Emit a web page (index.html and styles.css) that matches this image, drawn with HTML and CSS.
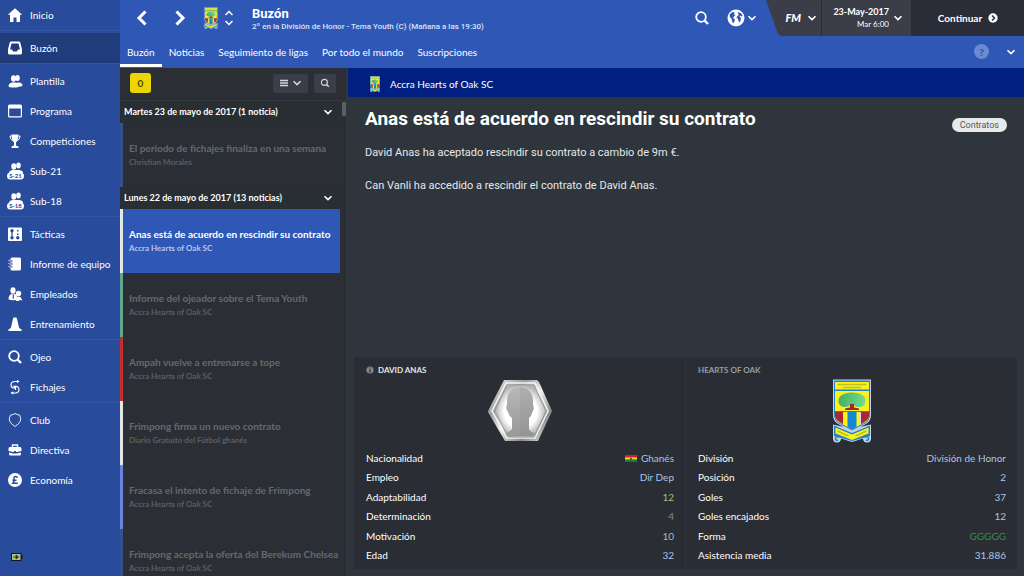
FILE: index.html
```html
<!DOCTYPE html>
<html lang="es">
<head>
    <meta charset="UTF-8">
    <meta name="viewport" content="width=device-width, initial-scale=1">
    <title>Buzón</title>
    <link rel="stylesheet" href="styles.css">
</head>
<body>
<svg class="sprite" aria-hidden="true">
    <defs>
        <linearGradient id="leaf" x1="0" y1="0" x2="1" y2="0">
            <stop offset="0" stop-color="#45b060"/>
            <stop offset="1" stop-color="#72dc94"/>
        </linearGradient>
        <linearGradient id="frame" x1="0" y1="0" x2="1" y2="1">
            <stop offset="0" stop-color="#f4f4f4"/>
            <stop offset=".3" stop-color="#9d9d9d"/>
            <stop offset=".5" stop-color="#f2f2f2"/>
            <stop offset=".75" stop-color="#8a8a8a"/>
            <stop offset="1" stop-color="#f0f0f0"/>
        </linearGradient>
        <radialGradient id="glow">
            <stop offset=".65" stop-color="#ffffff"/>
            <stop offset="1" stop-color="#b4b4b4"/>
        </radialGradient>
        <linearGradient id="head" x1="0" y1="0" x2="0" y2="1">
            <stop offset="0" stop-color="#b8b8b8"/>
            <stop offset="1" stop-color="#989898"/>
        </linearGradient>
    </defs>
    <symbol id="crest" viewBox="0 0 39 64">
        <path d="M.5.5h38v36q0 6-6 9l-5 2.500 11-2.500v14q0 4-4 4-4 0-4-4l-11 3.500-11-3.500q0 4-4 4-4 0-4-4v-14l11 2.500-5-2.500q-6-3-6-9z" fill="#c3d4ea"/>
        <path d="M1.500 1.500h36v34q0 6-5 9l-13 7-13-7q-5-3-5-9z" fill="#1c83c9"/>
        <path d="M2.500 3h34v7.500h-34zM2.500 12h34v20h-34z" fill="#fdf01c"/>
        <path d="M5 5.500h29M10 8.500h19" stroke="#b9c22a" stroke-width="1.500"/>
        <path d="M6 22q0-8 13.500-8.500Q33 14 33 22q0 6-7 6-4 0-5-3h-3q-1 3-5 3-7 0-7-6z" fill="url(#leaf)"/>
        <path d="M17.500 25h4v3.500l5 1v1.500h-14v-1.500l5-1z" fill="#a32531"/>
        <path d="M2.500 33h34v4q0 4-5 7l-12 6.500-12-6.500q-5-3-5-7z" fill="#fdf01c"/>
        <path d="M2.500 33h8.500v12.500l-4-2.500q-4.500-3-4.500-6zM36.500 33H28v12.500l4-2.500q4.500-3 4.500-6z" fill="#ab2733"/>
        <path d="M15 33h9v15l-4.500 2.500L15 48z" fill="#1488d4"/>
        <path d="M11 33v12.500M28 33v12.500" stroke="#cde0ec"/>
        <path d="M1.500 46.500l18 7.500 18-7.500v10.500l-18 5-18-5z" fill="#1c83c9"/>
        <path d="M3 48.500l16.500 7 16.500-7v6l-16.500 6.500-16.500-6.500z" fill="#fdf01c"/>
        <path d="M5 52l11 5M23 57l11-5" stroke="#b9c22a" stroke-width="1.800"/>
        <path d="M7 58q-4-1-4 1.500t2.500 1.500M32 58q4-1 4 1.500t-2.500 1.500" fill="none" stroke="#1c83c9" stroke-width="1.500"/>
    </symbol>
    <symbol id="people" viewBox="0 0 16 16">
        <ellipse cx="10.500" cy="5" rx="2.300" ry="3"/>
        <path d="M10 9.500h3q2.500 1 2.500 2.500t-3 1.500h-2z"/>
        <ellipse cx="6.500" cy="5.500" rx="2.500" ry="3.300"/>
        <path d="M1.500 13q0-2.500 3.500-3.500h3.500q3.500 1 3.500 3.500 0 1.500-5.200 1.500T1.500 13z"/>
    </symbol>
    <symbol id="squad" viewBox="0 0 18 18">
        <ellipse cx="11.500" cy="3.500" rx="2.300" ry="3"/>
        <ellipse cx="6.800" cy="4.500" rx="2.500" ry="3.300"/>
        <path d="M2 11q0-2.500 3.500-3h7q3.500.5 3.500 3z"/>
        <rect x="0" y="10.500" width="17" height="7" rx="3.500"/>
    </symbol>
    <symbol id="down" viewBox="0 0 10 10">
        <path d="M1.500 3.200 5 6.600l3.500-3.400" fill="none" stroke="currentColor" stroke-width="1.600"/>
    </symbol>
    <symbol id="search" viewBox="0 0 16 16">
        <circle cx="7" cy="7" r="4.800" fill="none" stroke="currentColor" stroke-width="1.800"/>
        <path d="M10.500 10.500l3.500 3.500" stroke="currentColor" stroke-width="2.400"/>
    </symbol>
</svg>

<div class="app">
    <nav class="sidebar">
        <ul>
            <li><a href="#"><svg viewBox="0 0 16 16"><path d="M8 1.200l7.200 6.600H13V15H9.500v-4.500h-3V15H3V7.800H.8z"/></svg>Inicio</a></li>
        </ul>
        <ul class="current">
            <li><a href="#"><svg viewBox="0 0 16 16"><path fill-rule="evenodd" d="M4 1.500h8q1 0 1.300 1L15 9.500V13q0 1.500-1.500 1.500h-11Q1 14.500 1 13V9.500l1.700-7q.3-1 1.300-1zM4.500 3.500 3 9.500h2l1 2h4l1-2h2l-1.500-6z"/></svg>Buzón</a></li>
        </ul>
        <ul>
            <li><a href="#"><svg><use href="#people"/></svg>Plantilla</a></li>
            <li><a href="#"><svg viewBox="0 0 16 16"><path fill-rule="evenodd" d="M2.500 1.500h11q1.500 0 1.500 1.500v10q0 1.500-1.500 1.500h-11Q1 14.500 1 13V3q0-1.500 1.500-1.500zM2.200 5.500v7.800h11.600V5.500z"/></svg>Programa</a></li>
            <li><a href="#"><svg viewBox="0 0 16 16"><path d="M4.500 1.500h7q0 6-2.500 8v3l2.500 1v1.500h-7v-1.500l2.500-1v-3q-2.500-2-2.500-8z"/><path d="M4.500 3H3q0 3.500 2.500 4.500M11.500 3H13q0 3.500-2.500 4.500" fill="none" stroke="currentColor"/></svg>Competiciones</a></li>
            <li><a href="#"><svg class="big" viewBox="0 0 18 18"><use href="#squad"/><text x="8.500" y="16">S-21</text></svg>Sub-21</a></li>
            <li><a href="#"><svg class="big" viewBox="0 0 18 18"><use href="#squad"/><text x="8.500" y="16">S-18</text></svg>Sub-18</a></li>
        </ul>
        <ul>
            <li><a href="#"><svg viewBox="0 0 16 16"><rect x="1" y="1.500" width="14" height="13.500" rx="1"/><g class="ink"><circle cx="5" cy="4.800" r="1.700"/><circle cx="5" cy="11.800" r="1.700"/><circle cx="10.800" cy="11.800" r="1.700"/><path d="M4.400 5h1.200v6H4.400zM10 4h1.500v1.500H10zM10 7.500h1.500V9H10z"/></g></svg>Tácticas</a></li>
            <li><a href="#"><svg viewBox="0 0 16 16"><path d="M5 1.500h7.500q1.500 0 1.500 1.500v10q0 1.500-1.500 1.500H5q-1.500 0-1.500-1.500v-1.500q2 1 2-.7T3.500 10V8.800q2 1 2-.8t-2-.8V6q2 1 2-.8t-2-.9V3Q3.500 1.500 5 1.500z"/><path d="M5 5H2.500q-1-.2-1-1.200M5 8H2.500q-1-.2-1-1M5 11H2.500q-1-.2-1-1" fill="none" stroke="currentColor" stroke-width=".8"/></svg>Informe de equipo</a></li>
            <li><a href="#"><svg viewBox="0 0 16 16"><ellipse cx="6" cy="4.500" rx="2.600" ry="3.300"/><path d="M1.500 13q0-4 3-5h3.500q2.500 1 2 3l-1 3q-7.500.5-7.500-1z"/><path class="ink" d="M5.500 8.500H7l-.3 4.500h-.9z"/><circle cx="11.500" cy="7.500" r="2.700"/><path d="M8.800 15l.7-4q2-1.200 4 0L15.500 14.500 12.500 14 12 15z"/></svg>Empleados</a></li>
            <li><a href="#"><svg viewBox="0 0 16 16"><path d="M7 1.500h2q.7 0 .9.800L12 11.500q.3 1 2.500 1.800V15h-13v-1.700q2.200-.8 2.500-1.800l2.100-9.200q.2-.8.900-.8z"/></svg>Entrenamiento</a></li>
        </ul>
        <ul>
            <li><a href="#"><svg><use href="#search"/></svg>Ojeo</a></li>
            <li><a href="#"><svg viewBox="0 0 16 16"><path d="M12 2.500H8q-4 0-4 3.300T7.500 9M4 14h4.500q3.500-.5 3.500-3.600T8.500 7.300V11" fill="none" stroke="currentColor" stroke-width="1.200"/><path d="M5.800 6.800h3.500L8 10zM10 .8l2.600 1.700-2.600 1.700zM6.300 12.200 3.700 14l2.600 1.600z"/></svg>Fichajes</a></li>
        </ul>
        <ul>
            <li><a href="#"><svg viewBox="0 0 16 16"><path d="M8 1.500q2 1.300 4.500 1.500 2 3.500.8 6.200Q12 12 8 14.500 4 12 2.700 9.200 1.500 6.500 3.500 3 6 2.800 8 1.500z" fill="none" stroke="currentColor" stroke-width=".9"/></svg>Club</a></li>
            <li><a href="#"><svg viewBox="0 0 16 16"><path d="M5.500 5V3h5v2" fill="none" stroke="currentColor" stroke-width="1.400"/><path d="M3 5h10q1.500 0 1.500 1.500V9L10 10H9V9H7v1H6L1.500 9V6.500Q1.500 5 3 5zM2 10.500l4 1h4l4-1V12q0 1.500-1.500 1.500h-9Q2 13.500 2 12z"/></svg>Directiva</a></li>
            <li><a href="#"><svg viewBox="0 0 16 16"><circle cx="8" cy="8" r="7"/><path d="M10.500 5.800Q10 4.500 8.600 4.500 6.800 4.500 7 6.500q.5 3-1 4.800h4.800M5.500 8.300h4" class="ink-line"/></svg>Economía</a></li>
        </ul>
        <svg class="battery" viewBox="0 0 12 8" role="img" aria-label="Batería"><rect x=".5" y=".5" width="9.500" height="7" fill="#a9c27a" stroke="#111820"/><path d="M10 2h1.500v4H10z" fill="#111820"/><path d="M2 4h3M5 2l2.500 2L5 6z" stroke="#26331c" fill="#26331c" stroke-width=".8"/></svg>
    </nav>

    <div class="page">
        <header class="header">
            <div class="topbar">
                <div class="history">
                    <button type="button" aria-label="Atrás"><svg viewBox="0 0 16 16"><path d="M11.500 1.500 5 8l6.500 6.500"/></svg></button>
                    <button type="button" aria-label="Adelante"><svg viewBox="0 0 16 16"><path d="M4.500 1.500 11 8l-6.500 6.500"/></svg></button>
                </div>
                <svg class="crest-top" role="img" aria-label="Hearts of Oak"><use href="#crest"/></svg>
                <button type="button" class="switch" aria-label="Cambiar"><svg viewBox="0 0 10 18"><path d="M1.500 6 5 2.500 8.500 6M1.500 12 5 15.500 8.500 12"/></svg></button>
                <div class="heading">
                    <h1>Buzón</h1>
                    <p>2º en la División de Honor - Tema Youth (C) (Mañana a las 19:30)</p>
                </div>
                <button type="button" class="find" aria-label="Buscar"><svg><use href="#search"/></svg></button>
                <button type="button" class="world" aria-label="Mundo"><svg viewBox="0 0 18 18"><circle cx="9" cy="9" r="8.500" fill="#fff"/><path d="M2.500 5.500 5.500 3l2 .5L7 5.500l1.500.5L7 7.500 6 9l2 1.500-1.300 3.500-1.200-.5-.8-3.500L2.800 8zM10.500 3l3.500 1.200L15.800 7l-1.300.5-1-1-1 1L14 9l-.5 3-1.500 1.500-1-3.500-1.500-1.500 1-1.500 1.300-1z" fill="#2f57b6"/></svg><svg class="chev"><use href="#down"/></svg></button>
                <div class="status">
                    <button type="button" class="fm"><b>FM</b><svg class="chev"><use href="#down"/></svg></button>
                    <button type="button" class="date"><span><b>23-May-2017</b><small>Mar 6:00</small></span><svg class="chev"><use href="#down"/></svg></button>
                    <button type="button" class="continue">Continuar<svg viewBox="0 0 10 10"><circle cx="5" cy="5" r="4.700" fill="#fff"/><path d="M4 2.500 6.500 5 4 7.500" fill="none" stroke="#2a2c38" stroke-width="1.500"/></svg></button>
                </div>
            </div>
            <div class="tabbar">
                <nav class="tabs">
                    <a href="#" class="on">Buzón</a>
                    <a href="#">Noticias</a>
                    <a href="#">Seguimiento de ligas</a>
                    <a href="#">Por todo el mundo</a>
                    <a href="#">Suscripciones</a>
                </nav>
                <button type="button" class="help">?</button>
                <button type="button" class="more" aria-label="Más"><svg class="chev"><use href="#down"/></svg></button>
            </div>
        </header>

        <div class="content">
            <section class="inbox">
                <div class="tools">
                    <span class="count">0</span>
                    <button type="button" aria-label="Filtrar"><svg viewBox="0 0 10 10"><path d="M1 2.500h8M1 5h8M1 7.500h8" stroke="currentColor" stroke-width="1.600"/></svg><svg class="chev"><use href="#down"/></svg></button>
                    <button type="button" aria-label="Buscar noticias"><svg><use href="#search"/></svg></button>
                </div>
                <div class="scroll">
                    <div class="news">
                        <button type="button" class="day">Martes 23 de mayo de 2017 (1 noticia)<svg class="chev"><use href="#down"/></svg></button>
                        <a href="#" class="item navy"><b>El periodo de fichajes finaliza en una semana</b><small>Christian Morales</small></a>
                        <button type="button" class="day">Lunes 22 de mayo de 2017 (13 noticias)<svg class="chev"><use href="#down"/></svg></button>
                        <a href="#" class="item white selected"><b>Anas está de acuerdo en rescindir su contrato</b><small>Accra Hearts of Oak SC</small></a>
                        <a href="#" class="item green"><b>Informe del ojeador sobre el Tema Youth</b><small>Accra Hearts of Oak SC</small></a>
                        <a href="#" class="item red"><b>Ampah vuelve a entrenarse a tope</b><small>Accra Hearts of Oak SC</small></a>
                        <a href="#" class="item white"><b>Frimpong firma un nuevo contrato</b><small>Diario Gratuito del Fútbol ghanés</small></a>
                        <a href="#" class="item violet"><b>Fracasa el intento de fichaje de Frimpong</b><small>Accra Hearts of Oak SC</small></a>
                        <a href="#" class="item navy"><b>Frimpong acepta la oferta del Berekum Chelsea</b><small>Accra Hearts of Oak SC</small></a>
                    </div>
                    <div class="track"><div class="thumb"></div></div>
                </div>
            </section>

            <main class="message">
                <div class="sender"><svg><use href="#crest"/></svg>Accra Hearts of Oak SC</div>
                <article>
                    <div class="subject">
                        <h2>Anas está de acuerdo en rescindir su contrato</h2>
                        <a href="#" class="tag">Contratos</a>
                    </div>
                    <p>David Anas ha aceptado rescindir su contrato a cambio de 9m €.</p>
                    <p>Can Vanli ha accedido a rescindir el contrato de David Anas.</p>
                </article>
                <div class="cards">
                    <section class="card">
                        <h3 class="strong"><svg viewBox="0 0 10 10"><circle cx="5" cy="5" r="4.500" fill="#85878b"/><path d="M5 2v1.200M5 4.200V8" stroke="#2b2d35" stroke-width="1.500"/></svg>DAVID ANAS</h3>
                        <svg class="portrait" viewBox="0 0 66 64" role="img" aria-label="David Anas">
                            <path d="M17 1h33l2 2 13 29-14 30H18L1 33l1-3z" fill="url(#frame)"/>
                            <path d="M19 4h29l13 28-13 27H20L5 32z" fill="none" stroke="#f4f4f4" stroke-width="1.500"/>
                            <path d="M20 6h27l12 26-12 26H21L8 32z" fill="url(#glow)" stroke="#999"/>
                            <path d="M33 8q13 1 13 15v3q2 3-1 8-1 4-3 5v11q1 3 6 4l-2 3H20l-2-3q5-1 7-4V39q-3-2-4-6-3-4-1-7v-3Q20 9 33 8z" fill="url(#head)"/>
                            <path d="M33 8v49h13l2-3q-5-1-6-4V39q2-1 3-5 3-5 1-8v-3Q46 9 33 8z" fill="#777" opacity=".12"/>
                        </svg>
                        <table>
                            <tr><th scope="row">Nacionalidad</th><td><svg class="flag" viewBox="0 0 12 7" role="img" aria-label="Ghana"><path fill="#d5202c" d="M0 0h12v2.400H0z"/><path fill="#f6d515" d="M0 2.300h12v2.400H0z"/><path fill="#177a43" d="M0 4.700h12V7H0z"/><path fill="#222" d="M6 2.300l.4.900h1l-.8.600.3 1L6 4.200l-.9.600.3-1-.8-.6h1z"/></svg>Ghanés</td></tr>
                            <tr><th scope="row">Empleo</th><td>Dir Dep</td></tr>
                            <tr><th scope="row">Adaptabilidad</th><td class="good">12</td></tr>
                            <tr><th scope="row">Determinación</th><td class="low">4</td></tr>
                            <tr><th scope="row">Motivación</th><td class="mid">10</td></tr>
                            <tr><th scope="row">Edad</th><td>32</td></tr>
                        </table>
                    </section>
                    <section class="card">
                        <h3>HEARTS OF OAK</h3>
                        <svg class="portrait" role="img" aria-label="Hearts of Oak"><use href="#crest"/></svg>
                        <table>
                            <tr><th scope="row">División</th><td>División de Honor</td></tr>
                            <tr><th scope="row">Posición</th><td>2</td></tr>
                            <tr><th scope="row">Goles</th><td>37</td></tr>
                            <tr><th scope="row">Goles encajados</th><td>12</td></tr>
                            <tr><th scope="row">Forma</th><td class="form">GGGGG</td></tr>
                            <tr><th scope="row">Asistencia media</th><td>31.886</td></tr>
                        </table>
                    </section>
                </div>
            </main>
        </div>
    </div>
</div>
</body>
</html>
```
FILE: styles.css
```css
* {
    margin: 0;
    padding: 0;
    box-sizing: border-box;
}

body {
    font: 10px/14px Lato, "Open Sans", sans-serif;
    color: #fff;
    background: #2e353c;
}

a {
    color: inherit;
    text-decoration: none;
}

button {
    display: flex;
    align-items: center;
    border: 0;
    background: none;
    color: inherit;
    font: inherit;
    cursor: pointer;
}

ul {
    list-style: none;
}

svg {
    display: block;
    flex: none;
    fill: currentColor;
}

.sprite {
    position: absolute;
    width: 0;
    height: 0;
}

.chev {
    width: 10px;
    height: 10px;
}

.app {
    display: flex;
    height: 100vh;
    overflow: hidden;
}

/* menu */
.sidebar {
    display: flex;
    flex-direction: column;
    flex: none;
    width: 120px;
    background: #284b9b;
}

.sidebar ul {
    border-bottom: 1px solid #3255a5;
    margin-bottom: 2px;
}

.sidebar ul:last-of-type {
    border: 0;
}

.sidebar .current {
    background: #213c7b;
}

.sidebar a {
    display: flex;
    align-items: center;
    gap: 7px;
    height: 30px;
    padding: 0 0 1px 7px;
    white-space: nowrap;
}

.sidebar a svg {
    width: 16px;
    height: 16px;
}

.sidebar a .big {
    width: 18px;
    height: 18px;
    margin-right: -2px;
}

.sidebar text {
    font-size: 6px;
    font-weight: bold;
    text-anchor: middle;
    fill: #284b9b;
}

.ink {
    fill: #284b9b;
}

.ink-line {
    fill: none;
    stroke: #284b9b;
    stroke-width: 1.500;
}

.sidebar .battery {
    width: 12px;
    height: 8px;
    margin: auto 0 15px 11px;
}

.page {
    flex: 1;
    display: flex;
    flex-direction: column;
    min-width: 0;
}

/* header */
.header {
    background: #2f57b6;
    border-bottom: 1px solid #3d5584;
}

.topbar {
    display: flex;
    align-items: center;
    height: 36px;
}

.history {
    display: flex;
    gap: 22px;
    padding-left: 14px;
}

.history svg {
    width: 16px;
    height: 16px;
    fill: none;
    stroke: #fff;
    stroke-width: 3;
}

.crest-top {
    width: 14px;
    height: 22px;
    margin-left: 16px;
}

.switch {
    margin-left: 6px;
}

.switch svg {
    width: 10px;
    height: 18px;
    fill: none;
    stroke: #fff;
    stroke-width: 1.500;
}

.heading {
    flex: 1;
    margin-left: 18px;
    padding-top: 3px;
    font-family: Roboto, "Open Sans", sans-serif;
    white-space: nowrap;
}

.heading h1 {
    font-size: 13px;
    line-height: 13px;
}

.heading p {
    font-size: 8px;
    line-height: 13px;
    font-weight: 500;
    color: #d9e2f5;
}

.find svg {
    width: 16px;
    height: 16px;
}

.world {
    gap: 2px;
    margin: 0 9px 0 17px;
}

.world svg {
    width: 18px;
    height: 18px;
}

.world .chev {
    width: 10px;
    height: 10px;
}

.status {
    display: flex;
    align-self: stretch;
    background: #3b3d48;
    clip-path: polygon(0 0, 100% 0, 100% 100%, 15px 100%, 12px 34px);
}

.status button + button {
    border-left: 1px solid #2a2c36;
}

.status .fm {
    justify-content: flex-end;
    gap: 6px;
    width: 55px;
    padding-right: 4px;
}

.fm b {
    font-size: 11px;
    font-weight: 900;
    font-style: italic;
}

.status .date {
    gap: 4px;
    justify-content: flex-end;
    width: 90px;
    padding-right: 8px;
    text-align: right;
}

.date b,
.date small {
    display: block;
    font-size: 9px;
    line-height: 12px;
}

.date small {
    font-size: 8px;
}

.status .continue {
    gap: 6px;
    justify-content: center;
    width: 113px;
    background: #2a2c38;
    font-weight: bold;
}

.continue svg {
    width: 10px;
    height: 10px;
}

.tabbar {
    display: flex;
    align-items: center;
    height: 31px;
    padding-right: 8px;
}

.tabs {
    display: flex;
    flex: 1;
    align-self: stretch;
    white-space: nowrap;
}

.tabs a {
    padding: 9px 7px 5px;
    border-bottom: 3px solid transparent;
}

.tabs .on {
    border-color: #fff;
}

.help {
    justify-content: center;
    width: 15px;
    height: 15px;
    margin-right: 17px;
    border-radius: 50%;
    background: #6d89cf;
    color: #2f57b6;
    font-weight: 900;
}

.content {
    flex: 1;
    display: flex;
    min-height: 0;
}

/* news list */
.inbox {
    display: flex;
    flex-direction: column;
    flex: 0 0 22%;
    min-width: 227px;
    background: #2b2f35;
    border-right: 1px solid #32373d;
}

.tools {
    display: flex;
    align-items: center;
    gap: 6px;
    height: 33px;
    padding: 0 10px 2px;
    border-bottom: 1px solid #33383d;
}

.count {
    width: 21px;
    margin-right: auto;
    border-radius: 3px;
    background: #ecd500;
    color: #4b4508;
    font-weight: bold;
    line-height: 20px;
    text-align: center;
}

.tools button {
    gap: 3px;
    height: 19px;
    padding: 0 6px;
    border-radius: 2px;
    background: #3b3d48;
    color: #d5d6d9;
}

.tools button svg {
    width: 10px;
    height: 10px;
}

.scroll {
    flex: 1;
    display: flex;
    gap: 2px;
    min-height: 0;
    overflow: hidden;
}

.news {
    flex: 1;
    min-width: 0;
}

.day {
    justify-content: space-between;
    width: 100%;
    height: 22px;
    padding: 0 7px 0 4px;
    background: #292e32;
    font-size: 9px;
    font-weight: bold;
    white-space: nowrap;
}

.item {
    display: block;
    height: 64px;
    padding: 18px 0 0 6px;
    border-left: 3px solid;
    white-space: nowrap;
}

.item b,
.item small {
    display: block;
    font-size: 10px;
    line-height: 14px;
    color: #66696d;
}

.item small {
    font-size: 8px;
    font-weight: bold;
    color: #5b5e63;
}

.item.navy {
    border-color: #35508f;
}

.item.white {
    border-color: #e4e6e8;
}

.item.green {
    border-color: #5ea78c;
}

.item.red {
    border-color: #c22f2c;
}

.item.violet {
    border-color: #6b83dd;
}

.item.selected {
    background: #2f57b6;
}

.selected b {
    color: #fff;
}

.selected small {
    color: #b7c7ee;
}

.track {
    width: 4px;
    padding-top: 1px;
}

.thumb {
    height: 14px;
    background: #5b5e63;
    border-radius: 1px;
}

/* message */
.message {
    flex: 1;
    display: flex;
    flex-direction: column;
    min-width: 0;
    padding-left: 1px;
}

.sender {
    display: flex;
    align-items: center;
    gap: 9px;
    height: 29px;
    padding: 2px 0 0 21px;
    background: #001f80;
}

.sender svg {
    width: 12px;
    height: 16px;
}

article {
    flex: 1;
    padding: 9px 17px 0 17px;
    font-family: Roboto, "Open Sans", sans-serif;
}

.subject {
    display: flex;
    align-items: center;
    justify-content: space-between;
}

.subject h2 {
    font-size: 19px;
    line-height: 26px;
}

.tag {
    margin-top: 12px;
    padding: 0 8px;
    border-radius: 7px;
    background: #e8e9eb;
    color: #55575d;
    font-size: 9px;
    line-height: 14px;
}

article p {
    margin-top: 13px;
    font-size: 11px;
    line-height: 20px;
    color: #e6e8ea;
}

article .subject + p {
    margin-top: 11px;
}

.cards {
    display: flex;
    gap: 1px;
    padding: 0 7px 7px 6px;
}

.card {
    flex: 1;
    padding: 6px 11px 4px 12px;
    background: #2b2d35;
}

.card h3 {
    display: flex;
    align-items: center;
    gap: 4px;
    font-size: 8px;
    line-height: 14px;
    color: #9c9ea2;
}

.card .strong {
    color: #e4e5e7;
}

.card h3 svg {
    width: 8px;
    height: 8px;
}

.portrait {
    width: 66px;
    height: 64px;
    margin: 2px auto 5px;
}

table {
    width: 100%;
    height: 117px;
    border-collapse: collapse;
}

th {
    font-weight: normal;
    text-align: left;
}

td {
    text-align: right;
    color: #a9c4e6;
}

.flag {
    display: inline-block;
    width: 12px;
    height: 7px;
    margin-right: 4px;
}

.good {
    color: #93c96b;
}

.low {
    color: #85888c;
}

.mid {
    color: #a5bac2;
}

.form {
    color: #2f9440;
}
```
